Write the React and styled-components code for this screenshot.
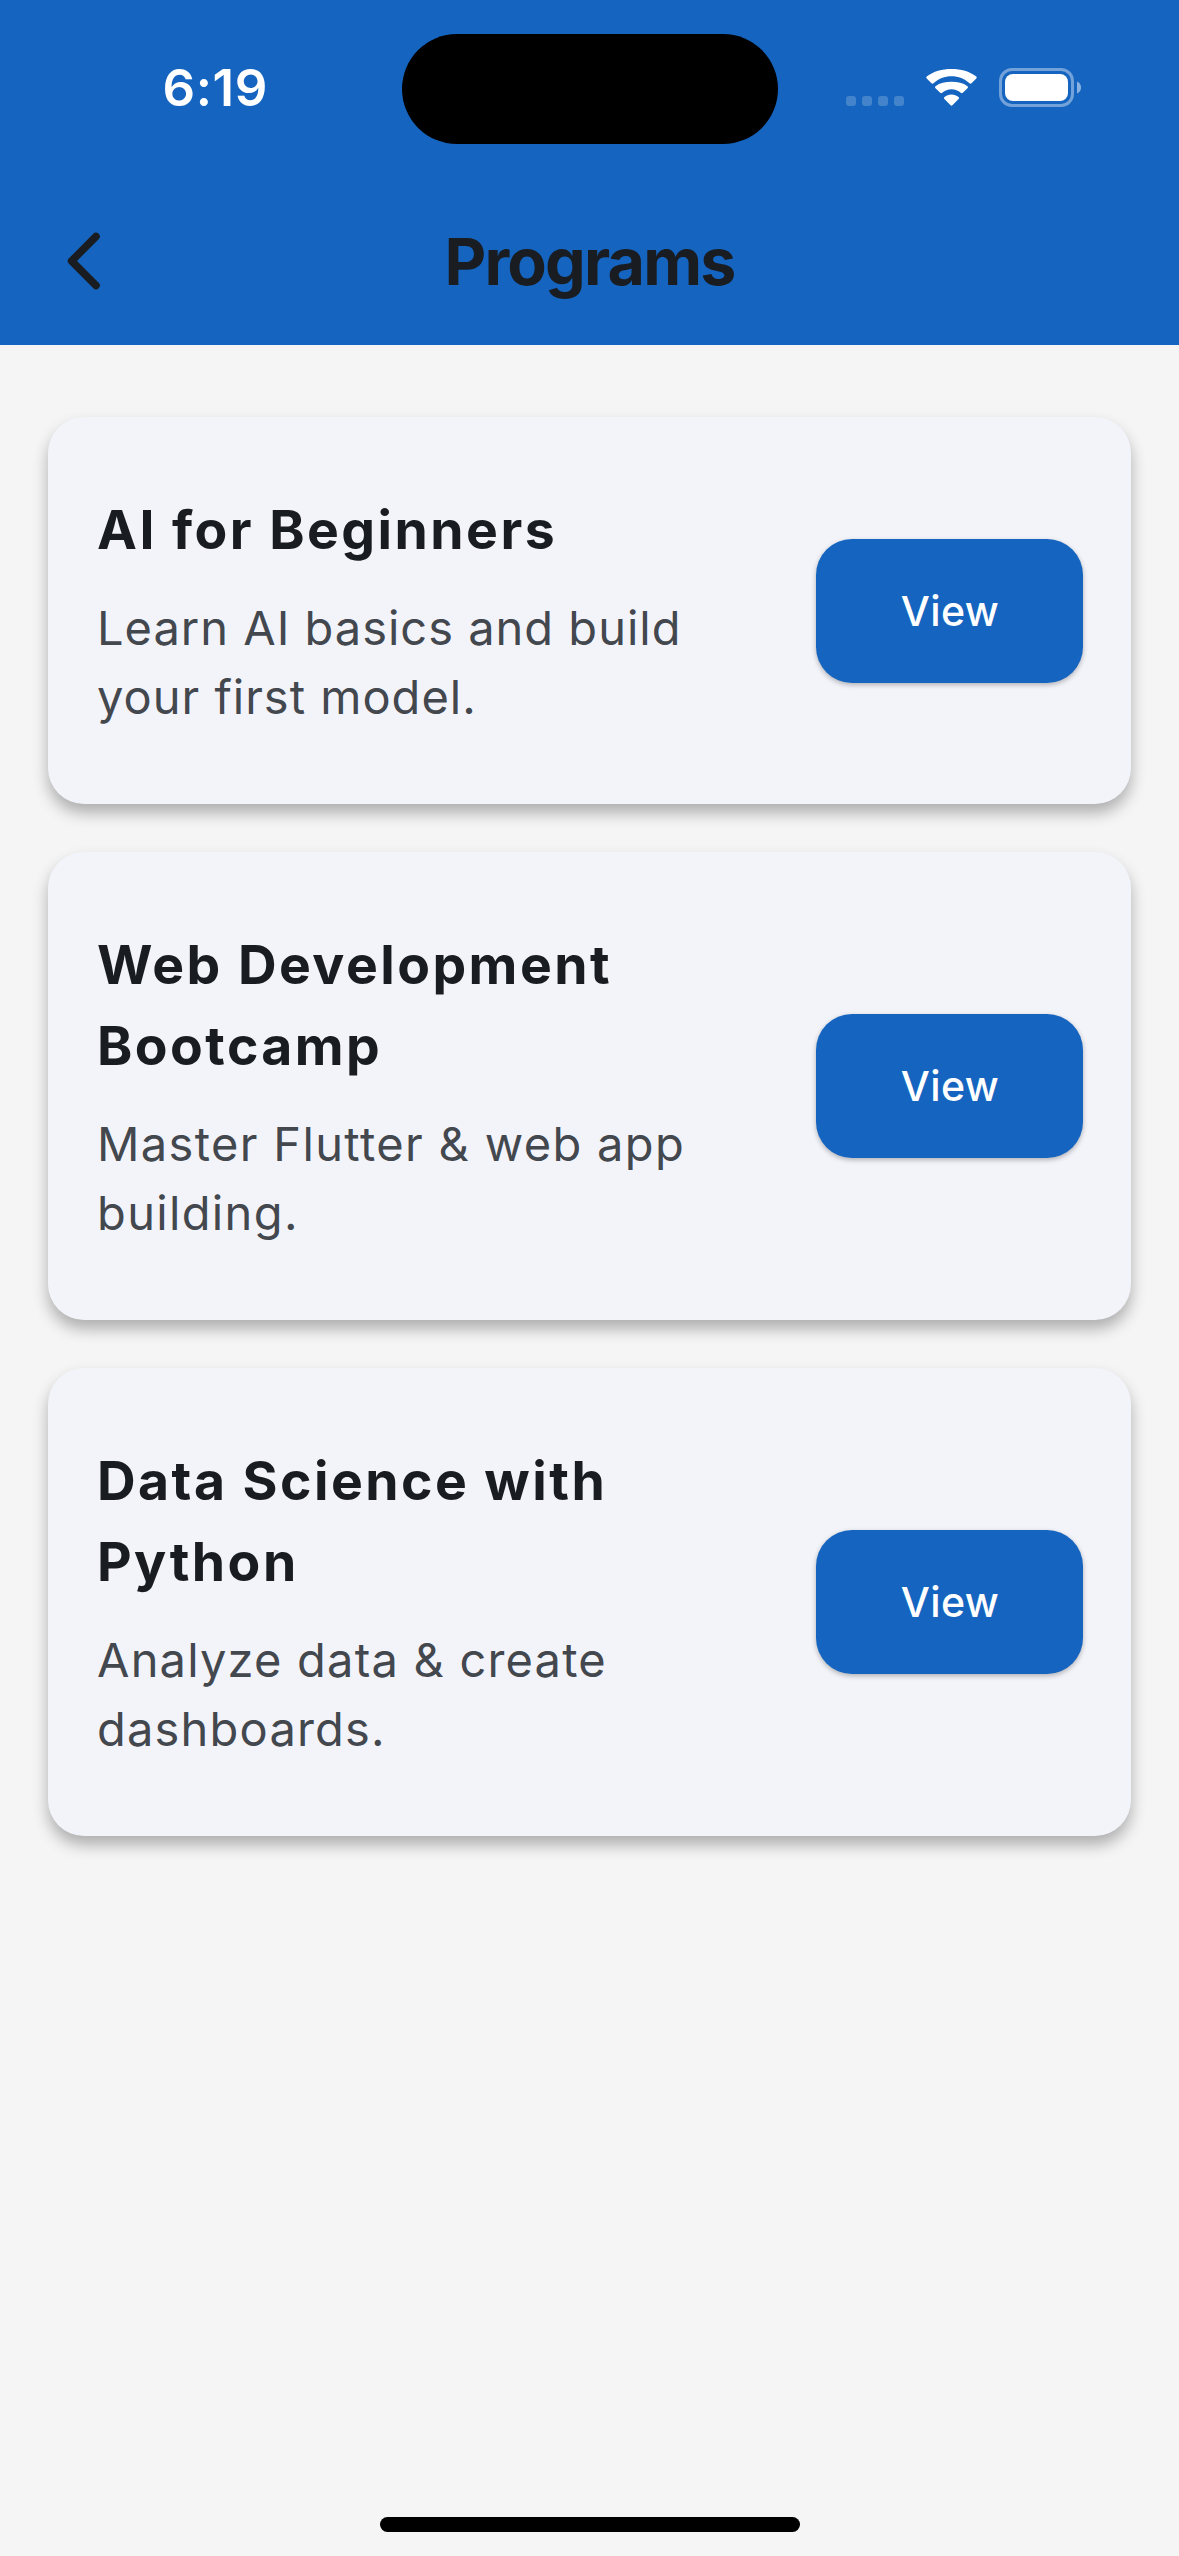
import React from "react";
import styled, { createGlobalStyle } from "styled-components";

const GlobalStyle = createGlobalStyle`
  html, body { margin: 0; padding: 0; background: #f5f5f5; }
  * { box-sizing: border-box; }
`;

const Screen = styled.div`
  display: flex;
  flex-direction: column;
  width: 1179px;
  height: 2556px;
  overflow: hidden;
  background: #f5f5f5;
  font-family: Inter, "Liberation Sans", sans-serif;
  color: #191c20;
`;

const Header = styled.header`
  height: 345px;
  background: #1565c0;
  display: flex;
  flex-direction: column;
`;

const StatusBar = styled.div`
  display: grid;
  grid-template-columns: 401.5px 376px 1fr;
  height: 177px;
  padding-top: 33px;
  align-items: start;
`;

const Clock = styled.div`
  padding: 25px 0 0 162.5px;
  font-size: 51px;
  line-height: 60px;
  font-weight: 600;
  letter-spacing: 0.6px;
  color: #fff;
`;

const Island = styled.div`
  height: 110.5px;
  margin-top: 0.6px;
  border-radius: 56px;
  background: #000;
`;

const StatusIcons = styled.div`
  display: flex;
  padding: 35px 0 0 68.5px;
  height: 74px;
  align-items: flex-end;
`;

const Signal = styled.div`
  display: flex;
  gap: 6px;
  margin: 0 22px 1px 0;
`;

const SignalDot = styled.span`
  width: 10px;
  height: 10px;
  border-radius: 3px;
  background: rgba(255, 255, 255, 0.2);
`;

const WifiIcon = styled.svg`
  width: 51px;
  height: 39px;
  margin-right: 22px;
`;

const BatteryIcon = styled.svg`
  width: 83px;
  height: 39px;
`;

const AppBar = styled.div`
  display: grid;
  grid-template-columns: 168px 1fr 168px;
  height: 168px;
  align-items: center;
`;

const BackButton = styled.button`
  display: flex;
  justify-content: flex-start;
  align-items: center;
  width: 168px;
  height: 168px;
  padding: 0 0 0 60px;
  border: 0;
  background: none;
`;

const PageTitle = styled.h1`
  margin: 0;
  padding-top: 2px;
  text-align: center;
  font-size: 64.5px;
  line-height: 84px;
  font-weight: 700;
  letter-spacing: -1.8px;
`;

const ProgramList = styled.main`
  flex: 1;
  display: flex;
  flex-direction: column;
  gap: 48px;
  padding: 72px 48px;
`;

const Card = styled.article`
  display: flex;
  align-items: center;
  gap: 72px;
  padding: 72px 48px 72px 49px;
  border-radius: 36px;
  background: #f3f4fa;
  box-shadow: 0 9px 15px rgba(0, 0, 0, 0.29);
`;

const CardText = styled.div`
  flex: 1;
  min-width: 0;
  display: flex;
  flex-direction: column;
  gap: 23px;
  padding-bottom: 1px;
`;

const CardTitle = styled.h2`
  margin: 0;
  font-size: 53.5px;
  line-height: 81px;
  font-weight: 700;
  letter-spacing: 2.45px;
`;

const CardDescription = styled.p`
  margin: 0;
  font-size: 47px;
  line-height: 69px;
  font-weight: 400;
  letter-spacing: ${({ $tracking }) => $tracking}px;
  color: #43474e;
`;

const ViewButton = styled.button`
  flex: none;
  width: 267px;
  height: 144px;
  padding: 0 0 0 1px;
  border: 0;
  border-radius: 36px;
  background: #1565c0;
  color: #fff;
  font-family: inherit;
  font-size: 41px;
  line-height: 60px;
  font-weight: 500;
  letter-spacing: 0.4px;
  box-shadow: 0 2px 5px rgba(0, 0, 0, 0.28);
`;

const HomeArea = styled.footer`
  display: flex;
  justify-content: center;
  height: 39px;
`;

const HomeIndicator = styled.div`
  width: 420px;
  height: 15px;
  border-radius: 8px;
  background: #000;
`;

const programs = [
  { title: "AI for Beginners", description: "Learn AI basics and build your first model.", tracking: 1 },
  { title: "Web Development Bootcamp", description: "Master Flutter & web app building.", tracking: 1.35 },
  { title: "Data Science with Python", description: "Analyze data & create dashboards.", tracking: 1.2 },
];

function Wifi() {
  return (
    <WifiIcon viewBox="0 0 51 39" fill="#fff" aria-hidden="true">
      <path d="M25.5 8.2c6.9 0 13.1 2.6 18 7.1.6.6 1.4.6 2 0l4.8-4.9c.6-.6.6-1.2 0-1.8C43.500 3.300 35 1 25.500 1S7.500 3.300.7 8.600c-.6.6-.6 1.200 0 1.800l4.800 4.900c.6.6 1.400.6 2 0 4.900-4.500 11.100-7.100 18-7.100z" />
      <path d="M25.500 21.300c3.500 0 6.700 1.300 9.300 3.500.7.6 1.400.6 2 0l4.700-4.600c.6-.6.6-1.400 0-2C37.200 14.800 31.600 13.700 25.500 13.700S13.800 14.800 9.500 18.200c-.6.6-.6 1.400 0 2l4.700 4.600c.6.6 1.300.6 2 0 2.600-2.200 5.800-3.500 9.300-3.500z" />
      <path d="M32.600 30.900c.6-.6.6-1.400-.1-1.900-1.900-1.500-4.300-2.500-7-2.500s-5.100 1-7 2.500c-.7.5-.7 1.300-.1 1.900l6.200 6.300c.5.600 1.300.6 1.800 0z" />
    </WifiIcon>
  );
}

function Battery() {
  return (
    <BatteryIcon viewBox="0 0 83 39" aria-hidden="true">
      <rect x="1.500" y="1.500" width="72" height="36" rx="11.500" fill="none" stroke="#fff" strokeOpacity="0.4" strokeWidth="3" />
      <rect x="6" y="6" width="63" height="27" rx="8" fill="#fff" />
      <path d="M78 13.500v12c2.500-1 4-3.300 4-6s-1.500-5-4-6z" fill="#fff" fillOpacity="0.5" />
    </BatteryIcon>
  );
}

export default function App() {
  return (
    <Screen>
      <GlobalStyle />
      <Header>
        <StatusBar>
          <Clock>6:19</Clock>
          <Island />
          <StatusIcons>
            <Signal>
              <SignalDot />
              <SignalDot />
              <SignalDot />
              <SignalDot />
            </Signal>
            <Wifi />
            <Battery />
          </StatusIcons>
        </StatusBar>
        <AppBar>
          <BackButton aria-label="Back">
            <svg width="48" height="72" viewBox="0 0 48 72" fill="none" stroke="#191c20" strokeWidth="7.600" strokeLinecap="round" strokeLinejoin="round" aria-hidden="true">
              <path d="M36 11.500 11.600 36 36 60.500" />
            </svg>
          </BackButton>
          <PageTitle>Programs</PageTitle>
        </AppBar>
      </Header>
      <ProgramList>
        {programs.map((program) => (
          <Card key={program.title}>
            <CardText>
              <CardTitle>{program.title}</CardTitle>
              <CardDescription $tracking={program.tracking}>{program.description}</CardDescription>
            </CardText>
            <ViewButton>View</ViewButton>
          </Card>
        ))}
      </ProgramList>
      <HomeArea>
        <HomeIndicator />
      </HomeArea>
    </Screen>
  );
}
